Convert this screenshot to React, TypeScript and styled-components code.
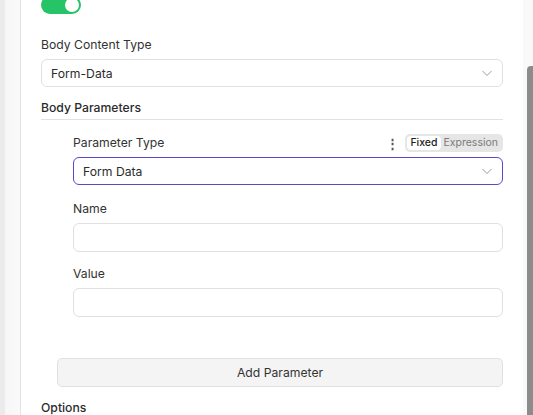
import React from "react";
import styled, { createGlobalStyle } from "styled-components";

const GlobalStyle = createGlobalStyle`
	html, body {
		margin: 0;
		padding: 0;
		height: 100%;
		overflow: hidden;
		background: #fafafa;
		font-family: Inter, "Noto Sans", "Liberation Sans", sans-serif;
		color: #2b2b2b;
	}
	#root {
		height: 100%;
	}
`;

const Shell = styled.div`
	display: flex;
	height: 415px;
	width: 533px;
	position: relative;
	overflow: hidden;
`;

const SideStrip = styled.div`
	flex: 0 0 20px;
	background: linear-gradient(to right, #ebebeb 0, #ebebeb 5px, #f6f6f6 5px, #fafafa 20px);
	border-right: 1px solid #e3e3e3;
`;

const Panel = styled.div`
	flex: 0 0 502px;
	box-sizing: border-box;
	background: #ffffff;
	padding: 0 20px;
	display: flex;
	flex-direction: column;
	margin-top: -4px;
`;

const Gutter = styled.div`
	flex: 1;
	background: #f9f9f9;
	position: relative;
`;

const ScrollThumb = styled.div`
	position: absolute;
	left: 4px;
	right: 0;
	top: 66px;
	bottom: 0;
	background: #8c8c8c;
	border-radius: 4px 0 0 0;
`;

const Switch = styled.div`
	width: 40px;
	height: 18px;
	border-radius: 9px;
	background: #27c367;
	position: relative;
	flex-shrink: 0;
	&:after {
		content: "";
		position: absolute;
		right: 2px;
		top: 2px;
		width: 14px;
		height: 14px;
		border-radius: 50%;
		background: #fff;
	}
`;

const Field = styled.div<{ $indent?: number; $gap?: number }>`
	display: flex;
	flex-direction: column;
	margin-left: ${(p) => p.$indent || 0}px;
	margin-top: ${(p) => p.$gap || 0}px;
`;

const LabelRow = styled.div`
	display: flex;
	align-items: center;
	justify-content: space-between;
	height: 18px;
	margin-bottom: 5px;
`;

const Label = styled.div`
	font-size: 12.2px;
	line-height: 18px;
	color: #333;
`;

const Section = styled.div`
	font-size: 12.2px;
	line-height: 18px;
	font-weight: 500;
	color: #2b2b2b;
	padding-bottom: 2px;
	border-bottom: 1px solid #e2e2e2;
`;

const Box = styled.div<{ $focus?: boolean; $tall?: boolean }>`
	height: ${(p) => (p.$tall ? 29 : 28)}px;
	box-sizing: border-box;
	border: 1px solid ${(p) => (p.$focus ? "#5a48c6" : "#e0e0e0")};
	border-radius: 6px;
	background: #fff;
	display: flex;
	align-items: center;
	justify-content: space-between;
	padding: 0 9px 0 9px;
	font-size: 12.2px;
	color: #2b2b2b;
`;

const Controls = styled.div`
	display: flex;
	align-items: center;
	gap: 6px;
`;

const Kebab = styled.div`
	font-size: 13px;
	font-weight: 600;
	color: #555;
	line-height: 1;
`;

const Toggle = styled.div`
	display: flex;
	background: #e6e6e6;
	border-radius: 5px;
	padding: 2px;
	height: 18px;
	box-sizing: border-box;
	align-items: stretch;
`;

const ToggleItem = styled.div<{ $active?: boolean }>`
	font-size: 10.5px;
	line-height: 14px;
	padding: 0 3px;
	border-radius: 4px;
	background: ${(p) => (p.$active ? "#fff" : "transparent")};
	color: ${(p) => (p.$active ? "#222" : "#7a7a7a")};
	font-weight: ${(p) => (p.$active ? 500 : 400)};
`;

const AddButton = styled.div`
	margin: 41px 0 0 16px;
	height: 30px;
	box-sizing: border-box;
	border: 1px solid #e0e0e0;
	border-radius: 5px;
	background: #f4f4f4;
	display: flex;
	align-items: center;
	justify-content: center;
	font-size: 12.2px;
	color: #333;
`;

const Options = styled.div`
	margin-top: 13px;
	font-size: 12.2px;
	font-weight: 500;
	color: #2b2b2b;
`;

const Chevron = () => (
	<svg width="12" height="12" viewBox="0 0 12 12" fill="none">
		<path d="M1.5 4l4.5 4.5L10.5 4" stroke="#9a9a9a" strokeWidth="1" />
	</svg>
);

export default function App() {
	return (
		<Shell>
			<GlobalStyle />
			<SideStrip />
			<Panel>
				<Switch />
				<Field $gap={22}>
					<LabelRow>
						<Label>Body Content Type</Label>
					</LabelRow>
					<Box>
						<span>Form-Data</span>
						<Chevron />
					</Box>
				</Field>
				<Field $gap={12}>
					<Section>Body Parameters</Section>
				</Field>
				<Field $indent={32} $gap={14}>
					<LabelRow>
						<Label>Parameter Type</Label>
						<Controls>
							<Kebab>⋮</Kebab>
							<Toggle>
								<ToggleItem $active>Fixed</ToggleItem>
								<ToggleItem>Expression</ToggleItem>
							</Toggle>
						</Controls>
					</LabelRow>
					<Box $focus>
						<span>Form Data</span>
						<Chevron />
					</Box>
				</Field>
				<Field $indent={32} $gap={15}>
					<LabelRow>
						<Label>Name</Label>
					</LabelRow>
					<Box $tall />
				</Field>
				<Field $indent={32} $gap={13}>
					<LabelRow>
						<Label>Value</Label>
					</LabelRow>
					<Box $tall />
				</Field>
				<AddButton>Add Parameter</AddButton>
				<Options>Options</Options>
			</Panel>
			<Gutter>
				<ScrollThumb />
			</Gutter>
		</Shell>
	);
}
